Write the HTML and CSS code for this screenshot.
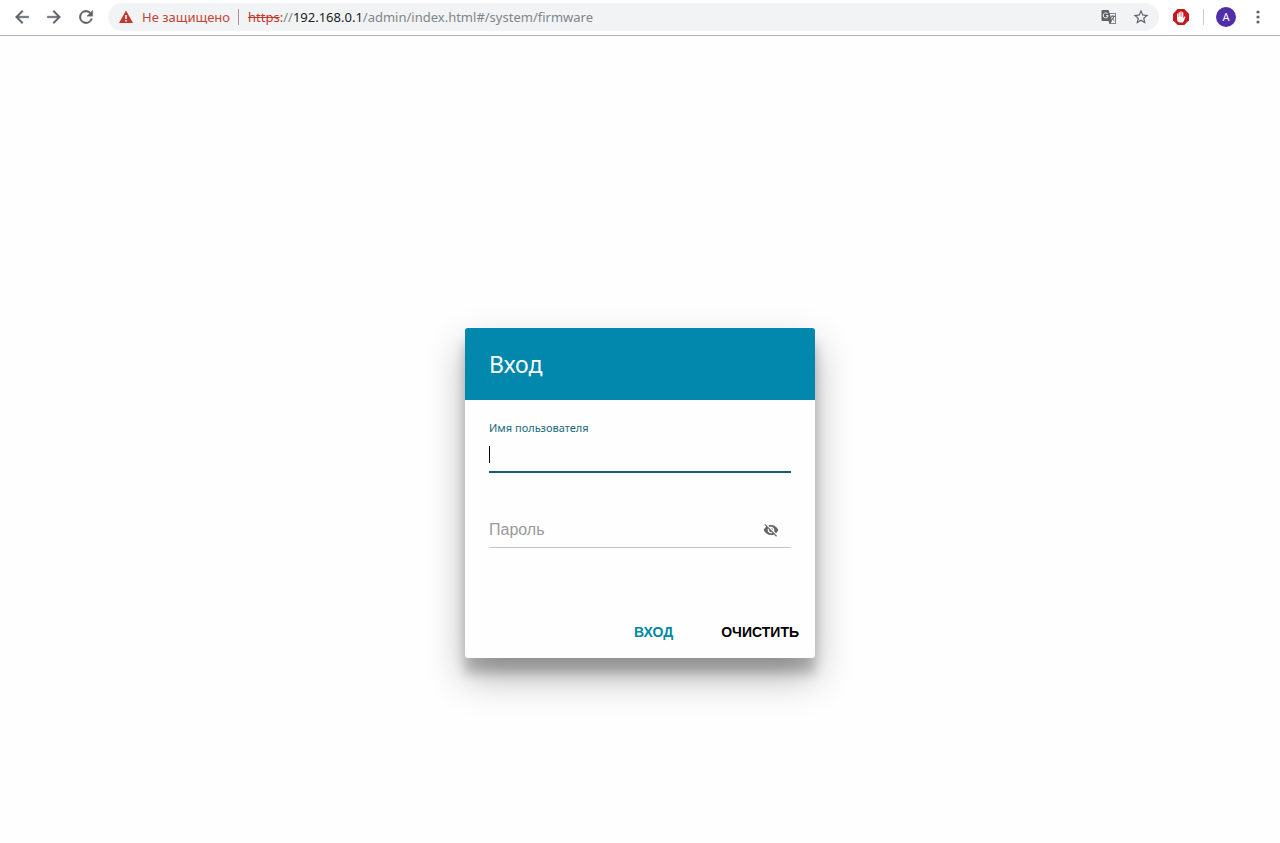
FILE: index.html
```html
<!DOCTYPE html>
<html lang="ru">
<head>
    <meta charset="UTF-8">
    <meta name="viewport" content="width=device-width, initial-scale=1">
    <title>Вход</title>
    <link rel="stylesheet" href="styles.css">
</head>
<body>
    <header class="toolbar">
        <nav class="nav-buttons">
            <button type="button" class="icon-button" aria-label="Назад">
                <svg width="20" height="20" viewBox="0 0 24 24"><path d="M20 11H7.8l5.6-5.6L12 4l-8 8 8 8 1.4-1.4L7.8 13H20z"/></svg>
            </button>
            <button type="button" class="icon-button" aria-label="Вперёд">
                <svg width="20" height="20" viewBox="0 0 24 24"><path d="M4 11h12.2l-5.6-5.6L12 4l8 8-8 8-1.4-1.4 5.6-5.6H4z"/></svg>
            </button>
            <button type="button" class="icon-button" aria-label="Обновить">
                <svg width="20" height="20" viewBox="0 0 24 24"><path d="M17.65 6.35A8 8 0 1 0 19.73 14h-2.08A6 6 0 1 1 12 6c1.66 0 3.14.69 4.22 1.78L13 11h7V4z"/></svg>
            </button>
        </nav>

        <div class="address-bar">
            <svg class="warning" width="16" height="16" viewBox="0 0 16 16"><path d="M8 1.5L15 14H1z"/><path class="mark" d="M7.2 6h1.6v4H7.2zM7.2 11h1.6v1.6H7.2z"/></svg>
            <span class="not-secure">Не защищено</span>
            <span class="separator"></span>
            <span class="url"><span class="scheme">https</span><span class="colon">:</span>//<span class="host">192.168.0.1</span>/admin/index.html#/system/firmware</span>
            <button type="button" class="icon-button" aria-label="Перевести">
                <svg width="16" height="16" viewBox="0 0 16 16">
                    <path d="M1.500 1h6l1 3H14c.6 0 1 .4 1 1v9c0 .6-.4 1-1 1H8.500l-1-3h-6c-.6 0-1-.4-1-1V2c0-.6.4-1 1-1z"/>
                    <path class="sheet" d="M8.800 4.800H14.200V14.200H9.500L11 12z"/>
                    <path class="g-line" d="M6.700 4.900A2.500 2.500 0 1 0 7.200 6.700H5"/>
                    <path class="glyph" d="M9.800 7.300H14M11.800 6.200v1.100M13 7.300c-.4 1.800-1.400 3.100-2.700 4.100M10.700 8.500c.6 1.500 1.600 2.500 2.700 3.200"/>
                </svg>
            </button>
            <button type="button" class="icon-button" aria-label="Добавить в закладки">
                <svg width="18" height="18" viewBox="0 0 24 24"><path d="M22 9.240l-7.190-.62L12 2 9.190 8.630 2 9.240l5.460 4.730L5.820 21 12 17.270 18.180 21l-1.630-7.030L22 9.240zM12 15.400l-3.760 2.270 1-4.280-3.320-2.880 4.380-.38L12 6.100l1.710 4.040 4.380.38-3.320 2.880 1 4.280L12 15.400z"/></svg>
            </button>
        </div>

        <div class="extensions">
            <button type="button" class="icon-button" aria-label="Блокировщик рекламы">
                <svg width="18" height="18" viewBox="0 0 18 18">
                    <path fill="#c8161d" d="M5.700 1h6.600L17 5.700v6.600L12.300 17H5.700L1 12.300V5.700z"/>
                    <path fill="#fff" d="M5 6.200c0-.9 1.200-.9 1.200 0V9h.4V4.700c0-.9 1.300-.9 1.300 0v3.800h.4V4c0-.9 1.300-.9 1.300 0v4.500h.4V4.700c0-.9 1.300-.9 1.300 0v5.500l1-1.400c.5-.7 1.400-.2 1.100.5l-1.700 3.900c-.4.9-1.100 1.300-2 1.300H8.300C6.200 14.500 5 13.200 5 11.200z"/>
                </svg>
            </button>
            <span class="divider"></span>
            <button type="button" class="avatar">A</button>
            <button type="button" class="icon-button" aria-label="Меню">
                <svg width="20" height="20" viewBox="0 0 20 20"><circle cx="10" cy="5" r="1.600"/><circle cx="10" cy="10" r="1.600"/><circle cx="10" cy="15" r="1.600"/></svg>
            </button>
        </div>
    </header>

    <main class="page">
        <form class="login-card">
            <h1 class="card-title">Вход</h1>
            <div class="card-content">
                <div class="field focused">
                    <label for="username">Имя пользователя</label>
                    <input type="text" id="username" autocomplete="off">
                    <span class="caret"></span>
                </div>
                <div class="field password">
                    <input type="password" id="password" placeholder="Пароль" aria-label="Пароль">
                    <button type="button" class="icon-button" aria-label="Показать пароль">
                        <svg width="16" height="16" viewBox="0 0 24 24"><path d="M12 7c2.760 0 5 2.240 5 5 0 .65-.13 1.260-.36 1.830l2.920 2.920c1.510-1.260 2.700-2.890 3.430-4.750-1.730-4.390-6-7.500-11-7.500-1.400 0-2.740.25-3.980.7l2.160 2.160C10.740 7.130 11.350 7 12 7zM2 4.270l2.280 2.280.46.46C3.080 8.300 1.780 10.020 1 12c1.730 4.390 6 7.500 11 7.500 1.550 0 3.030-.3 4.380-.84l.42.42L19.730 22 21 20.730 3.270 3 2 4.270zM7.530 9.800l1.550 1.550c-.05.21-.08.43-.08.65 0 1.660 1.340 3 3 3 .22 0 .44-.03.65-.08l1.550 1.550c-.67.33-1.410.53-2.200.53-2.760 0-5-2.240-5-5 0-.79.2-1.530.53-2.200zm4.310-.78l3.150 3.150.02-.16c0-1.660-1.340-3-3-3l-.17.01z"/></svg>
                    </button>
                </div>
            </div>
            <div class="card-actions">
                <button type="submit" class="text-button primary">Вход</button>
                <button type="reset" class="text-button">Очистить</button>
            </div>
        </form>
    </main>
</body>
</html>
```
FILE: styles.css
```css
* {
    box-sizing: border-box;
}
body {
    margin: 0;
    min-height: 100vh;
    display: flex;
    flex-direction: column;
    background-color: #fefefe;
    font-family: "Liberation Sans", Arial, sans-serif;
}
button {
    border: none;
    background: none;
    padding: 0;
    font-family: inherit;
    cursor: pointer;
}
svg {
    display: block;
    fill: #5f6368;
}

/* Browser toolbar */
.toolbar {
    display: flex;
    align-items: center;
    height: 36px;
    padding: 0 12px 2px;
    background-color: #fff;
    border-bottom: 1px solid #b4b4b4;
    font-family: "Noto Sans", "Open Sans", sans-serif;
    font-size: 13px;
}
.nav-buttons {
    display: flex;
    gap: 12px;
    margin-right: 12px;
}
.nav-buttons svg {
    stroke: #5f6368;
    stroke-width: 0.5;
}
.address-bar {
    flex: 1;
    display: flex;
    align-items: center;
    height: 28px;
    padding: 0 9px 0 10px;
    border-radius: 14px;
    background-color: #f1f3f4;
    white-space: nowrap;
}
.address-bar .icon-button {
    margin-left: 15px;
}
.warning {
    fill: #c5372c;
}
.warning .mark {
    fill: #fff;
}
.not-secure {
    margin-left: 8px;
    color: #c5443a;
}
.separator {
    width: 1px;
    height: 16px;
    margin: 0 9px 0 8px;
    background-color: #b08f90;
}
.url {
    flex: 1;
    color: #80868b;
}
.scheme {
    color: #c5372c;
    text-decoration: line-through;
}
.colon {
    color: #c5372c;
}
.host {
    color: #202124;
}
.sheet {
    fill: #f1f3f4;
}
.g-line {
    fill: none;
    stroke: #f1f3f4;
}
.glyph {
    fill: none;
    stroke: #5f6368;
}
.extensions {
    display: flex;
    align-items: center;
    margin-left: 13px;
}
.divider {
    width: 1px;
    height: 16px;
    margin: 0 12px 0 13px;
    background-color: #ccc;
}
.avatar {
    width: 20px;
    height: 20px;
    margin-right: 12px;
    border-radius: 50%;
    background-color: #512da8;
    color: #fff;
    font-size: 11px;
    line-height: 20px;
}

/* Login form */
.page {
    flex: 1;
    display: flex;
    align-items: center;
    justify-content: center;
    padding-top: 107px;
}
.login-card {
    width: 350px;
    max-width: 100%;
    border-radius: 3px;
    background-color: #fefefe;
    box-shadow: 0 19px 38px rgba(0,0,0,0.3), 0 15px 12px rgba(0,0,0,0.22);
}
.card-title {
    margin: 0;
    padding: 20px 24px;
    border-radius: 3px 3px 0 0;
    background-color: #0288ad;
    color: #fff;
    font-family: "Noto Sans", sans-serif;
    font-size: 23px;
    font-weight: 400;
    line-height: 32px;
}
.card-content {
    padding: 20px 24px 0;
}
.field {
    position: relative;
    display: flex;
    flex-direction: column;
}
.field label {
    color: #186a7c;
    font-family: "Noto Sans", sans-serif;
    font-size: 11px;
    line-height: 16px;
}
.field input {
    width: 100%;
    height: 37px;
    padding: 0;
    border: none;
    outline: none;
    background: none;
    font-family: inherit;
    font-size: 16px;
}
.field.focused input {
    border-bottom: 2px solid #1c5b6e;
}
.field input::placeholder {
    color: #999;
}
.caret {
    position: absolute;
    left: 0;
    bottom: 10px;
    width: 1px;
    height: 17px;
    background-color: #000;
}
.field.password {
    flex-direction: row;
    align-items: center;
    margin-top: 40px;
    border-bottom: 1px solid #c4c4c4;
}
.field.password input {
    flex: 1;
    height: 34px;
}
.field.password .icon-button {
    margin-right: 12px;
}
.field.password svg {
    fill: #666;
}
.card-actions {
    display: flex;
    justify-content: flex-end;
    gap: 32px;
    padding: 66px 8px 8px;
}
.text-button {
    height: 36px;
    padding: 0 8px;
    color: #000;
    font-size: 14px;
    font-weight: 700;
    text-transform: uppercase;
}
.text-button.primary {
    color: #0288a0;
}
```
